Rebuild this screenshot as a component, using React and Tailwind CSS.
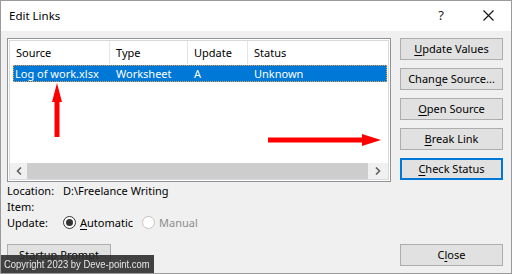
const FONT = { fontFamily: '"Noto Sans", "Open Sans", sans-serif' };

const BUTTONS = [
  { pre: "", key: "U", post: "pdate Values" },
  { pre: "Chan", key: "g", post: "e Source..." },
  { pre: "", key: "O", post: "pen Source" },
  { pre: "", key: "B", post: "reak Link" },
  { pre: "", key: "C", post: "heck Status", focused: true },
];

function DialogButton({ pre, keyChar, post, focused }) {
  return (
    <button
      className={`flex h-[22px] w-[103px] items-center justify-center bg-[#e1e1e1] pb-[2px] text-[11px] text-black ${
        focused ? "border-2 border-[#0078d7]" : "border border-[#adadad]"
      }`}
    >
      {pre}
      <span className="underline underline-offset-2">{keyChar}</span>
      {post}
    </button>
  );
}

export default function App() {
  return (
    <div
      className="relative flex h-[274px] w-[512px] flex-col overflow-hidden border border-[#9a9a9a] bg-[#f0f0f0] leading-none text-black"
      style={FONT}
    >
      <header className="flex h-[30px] shrink-0 items-center bg-white pb-[1px] pl-[8px]">
        <span className="text-[11.5px]">Edit Links</span>
        <span className="ml-auto mr-[39px] text-[13px] text-[#222]">?</span>
        <svg width="11" height="11" viewBox="0 0 11 11" className="mr-[17px]">
          <path d="M0.5 0.5 L10.5 10.5 M10.5 0.5 L0.5 10.5" stroke="#111" strokeWidth="1.1" />
        </svg>
      </header>

      <main className="flex flex-1 pb-[7px] pl-[6px] pr-[7px] pt-[7px]">
        <section className="flex w-[384px] flex-col">
          <div className="flex h-[144px] flex-col border border-[#8f949b] bg-white p-[1px]">
            <div className="flex flex-1 flex-col border border-[#d9d9d9]">
              <div className="flex h-[23px] text-[11px]">
                <div className="flex w-[100px] items-center border-r border-[#e5e5e5] pl-[6px]">Source</div>
                <div className="flex w-[78px] items-center border-r border-[#e5e5e5] pl-[6px]">Type</div>
                <div className="flex w-[60px] items-center border-r border-[#e5e5e5] pl-[6px]">Update</div>
                <div className="flex flex-1 items-center pl-[6px]">Status</div>
              </div>
              <div className="ml-[3px] mr-[1px] mt-[1px] flex h-[17px] items-center border border-dotted border-[#e8a050] bg-[#0078d7] pb-[1px] text-[11px] text-white">
                <div className="w-[96px] pl-[1px]">Log of work.xlsx</div>
                <div className="w-[78px] pl-[6px]">Worksheet</div>
                <div className="w-[60px] pl-[6px]">A</div>
                <div className="pl-[6px]">Unknown</div>
              </div>
              <div className="flex-1" />
              <div className="flex h-[16px] bg-[#f0f0f0]">
                <div className="flex w-[17px] items-center justify-center">
                  <svg width="6" height="8" viewBox="0 0 6 8">
                    <path d="M5 0.5 L1.5 4 L5 7.5" stroke="#606060" strokeWidth="1.6" fill="none" />
                  </svg>
                </div>
                <div className="flex-1 bg-[#cdcdcd]" />
                <div className="flex w-[20px] items-center justify-center">
                  <svg width="6" height="8" viewBox="0 0 6 8">
                    <path d="M1 0.5 L4.5 4 L1 7.5" stroke="#606060" strokeWidth="1.6" fill="none" />
                  </svg>
                </div>
              </div>
            </div>
          </div>

          <div className="flex flex-col text-[11px]">
            <div className="flex h-[16px] items-center">
              <span className="w-[56px]">Location:</span>
              <span>D:\Freelance Writing</span>
            </div>
            <div className="flex h-[16px] items-center">
              <span className="w-[56px]">Item:</span>
            </div>
            <div className="flex h-[16px] items-center">
              <span className="w-[56px]">Update:</span>
              <span className="flex h-[13px] w-[13px] items-center justify-center rounded-full border border-[#333] bg-white">
                <span className="h-[7px] w-[7px] rounded-full bg-[#333]" />
              </span>
              <span className="ml-[4px]">
                <span className="underline underline-offset-2">A</span>utomatic
              </span>
              <span className="ml-[9px] h-[13px] w-[13px] rounded-full border border-[#c4c4c4] bg-white" />
              <span className="ml-[4px] text-[#8d8d8d]">Manual</span>
            </div>
          </div>

          <button className="mt-auto flex h-[22px] w-[104px] items-center justify-center border border-[#adadad] bg-[#e1e1e1] pb-[2px] text-[11px]">
            Startup Prompt
          </button>
        </section>

        <aside className="ml-[9px] flex flex-col gap-[8px]">
          {BUTTONS.map((b) => (
            <DialogButton key={b.key + b.post} pre={b.pre} keyChar={b.key} post={b.post} focused={b.focused} />
          ))}
          <button className="mt-auto flex h-[22px] w-[103px] items-center justify-center border border-[#adadad] bg-[#e1e1e1] pb-[2px] text-[11px]">
            C<span className="underline underline-offset-2">l</span>ose
          </button>
        </aside>
      </main>

      <div
        className="absolute bottom-0 left-0 flex h-[18px] w-[153px] items-center bg-[#2e2e2e]/90 pl-[3px] text-[11px] text-[#e6e6e6]"
        style={{ fontFamily: '"Liberation Sans", Arial, sans-serif' }}
      >
        <span className="origin-left scale-x-[0.86] whitespace-nowrap">Copyright 2023 by Deve-point.com</span>
      </div>

      <svg className="pointer-events-none absolute left-[-1px] top-[-1px]" width="512" height="274">
        <defs>
          <filter id="soft" x="-20%" y="-20%" width="140%" height="140%">
            <feGaussianBlur stdDeviation="0.6" />
          </filter>
        </defs>
        <g fill="#ff0000" filter="url(#soft)">
          <polygon points="57,83 52,102 54.5,102 54.5,137 59.5,137 59.5,102 62,102" />
          <polygon points="268,137.5 362,137.5 362,134 381,140 362,146 362,142.5 268,142.5" />
        </g>
      </svg>
    </div>
  );
}
